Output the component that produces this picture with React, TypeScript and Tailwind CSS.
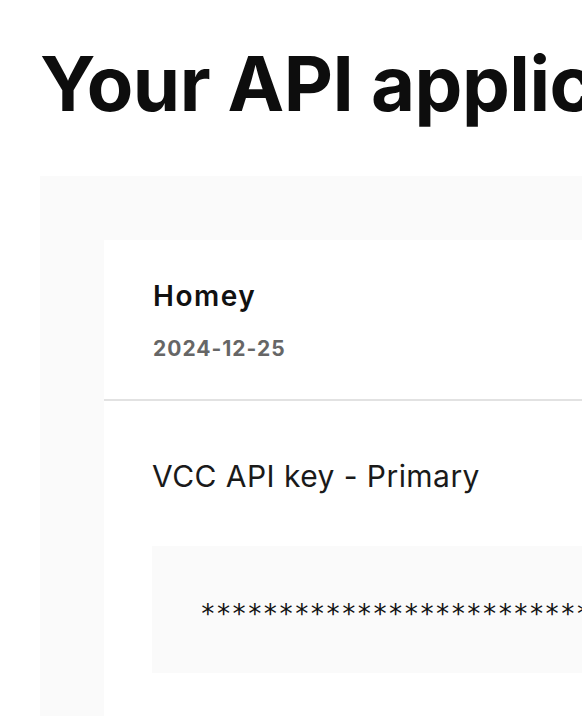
export default function App() {
  const font = { fontFamily: "Inter, 'Noto Sans', sans-serif" };
  return (
    <div className="min-h-screen w-full overflow-hidden bg-white pl-10" style={font}>
      <h1 className="whitespace-nowrap pt-[45px] text-[76px] font-bold leading-[76px] tracking-[-0.5px] text-[#0d0d0d]">
        Your API applications
      </h1>
      <div className="mt-[55px] h-[540px] bg-[#fafafa] pl-16 pt-16">
        <div className="h-full bg-white">
          <div className="pl-[49px] pt-10 pb-[36px]">
            <div className="text-[28px] font-semibold leading-[32px] tracking-[1.5px] text-[#111]">Homey</div>
            <div className="mt-[23px] text-[21px] font-bold leading-[28px] tracking-[1px] text-[#666]">2024-12-25</div>
          </div>
          <div className="border-t-2 border-[#e2e2e2] pl-12 pt-[57px]">
            <div className="whitespace-nowrap text-[30px] leading-[36px] tracking-[0.45px] text-[#1a1a1a]">VCC API key - Primary</div>
            <div className="mt-[52px] flex h-[127px] items-center bg-[#fafafa] pl-12 pt-[8px]">
              <span
                className="whitespace-nowrap text-[26px] leading-none text-[#111]"
                style={{ fontFamily: "'DejaVu Sans Mono', monospace" }}
              >
                ************************************
              </span>
            </div>
          </div>
        </div>
      </div>
    </div>
  );
}
